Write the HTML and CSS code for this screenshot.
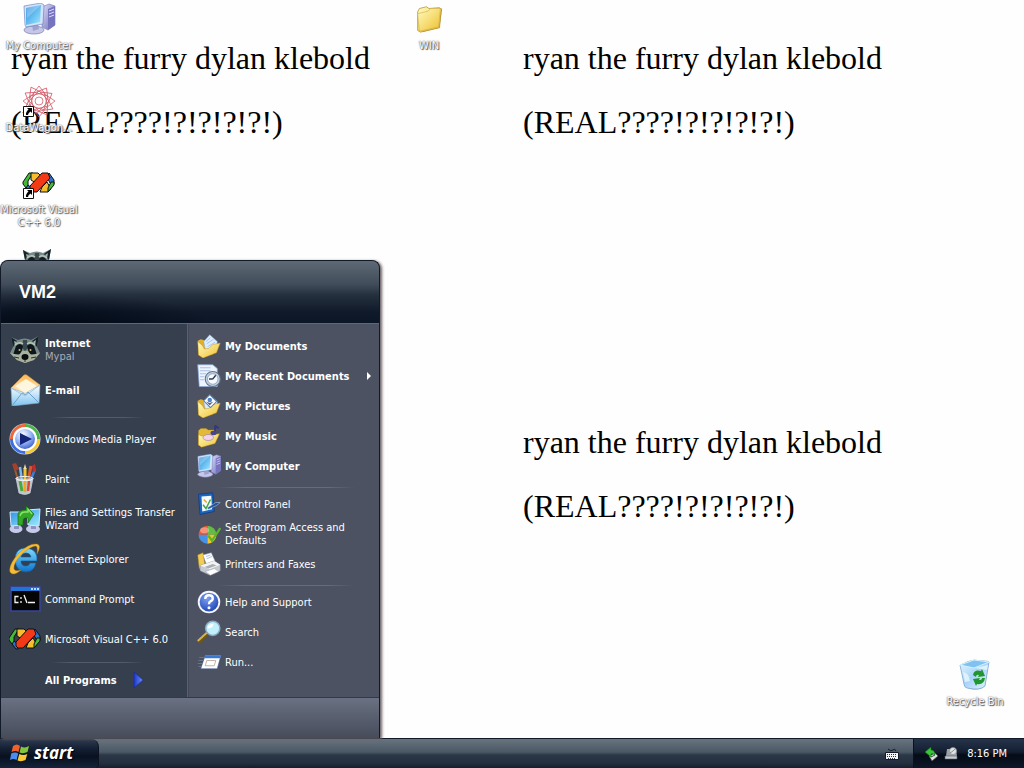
FILE: index.html
```html
<!DOCTYPE html>
<html lang="en">
<head>
<meta charset="utf-8">
<meta name="viewport" content="width=device-width, initial-scale=1">
<title>VM2 desktop</title>
<link rel="stylesheet" href="styles.css">
</head>
<body>
<svg class="sprite" aria-hidden="true">
  <defs>
    <linearGradient id="gFolder" x1="0" y1="0" x2="1" y2="1"><stop offset="0" stop-color="#fffbc0"/><stop offset="1" stop-color="#efc02e"/></linearGradient>
    <linearGradient id="gScreen" x1="0" y1="0" x2="1" y2="1"><stop offset="0" stop-color="#2a8de0"/><stop offset="1" stop-color="#9deaff"/></linearGradient>
    <linearGradient id="gTower" x1="0" y1="0" x2="1" y2="1"><stop offset="0" stop-color="#dcdcfa"/><stop offset="1" stop-color="#6c6cb8"/></linearGradient>
    <linearGradient id="gMail" x1="0" y1="0" x2="0" y2="1"><stop offset="0" stop-color="#ffffff"/><stop offset="1" stop-color="#7fc4f0"/></linearGradient>
    <linearGradient id="gFlap" x1="0" y1="0" x2="0" y2="1"><stop offset="0" stop-color="#ffb54a"/><stop offset="1" stop-color="#fff0cf"/></linearGradient>
    <linearGradient id="gBin" x1="0" y1="0" x2="1" y2="1"><stop offset="0" stop-color="#e6f7ff"/><stop offset=".5" stop-color="#a9d4fa"/><stop offset="1" stop-color="#e4f3ff"/></linearGradient>
    <radialGradient id="gBall" cx=".4" cy=".3" r=".8"><stop offset="0" stop-color="#fff"/><stop offset=".5" stop-color="#8fb0f5"/><stop offset="1" stop-color="#1f3fb8"/></radialGradient>
    <radialGradient id="gHelp" cx=".4" cy=".3" r=".8"><stop offset="0" stop-color="#7ea2f4"/><stop offset="1" stop-color="#1b3fb0"/></radialGradient>
    <linearGradient id="gIe" x1="0" y1="0" x2="0" y2="1"><stop offset="0" stop-color="#7fdcff"/><stop offset="1" stop-color="#0d72cc"/></linearGradient>
    <linearGradient id="gArrow" x1="0" y1="0" x2="1" y2="0"><stop offset="0" stop-color="#1c38c8"/><stop offset="1" stop-color="#6d90ff"/></linearGradient>
  </defs>

  <symbol id="computer" viewBox="0 0 32 32">
    <path d="M19 4l7-3 6 2v19l-7 5-6-3z" fill="url(#gTower)" stroke="#7a78b4" stroke-width=".6"/>
    <path d="M25 6l7-3v19l-7 5z" fill="#7674be"/>
    <path d="M26 8l5-2M26 11l5-2M26 14l5-2" stroke="#dedcff" stroke-width="1"/>
    <ellipse cx="11" cy="27" rx="10" ry="4" fill="#c4c6ea" stroke="#7b7ba8" stroke-width=".7"/>
    <path d="M9 21l6-1 1 6-6 2z" fill="#9fa2ce"/>
    <path d="M1 3l17-3 3 2-1 19-17 3-1-2z" fill="#d4e2fa" stroke="#5a79b8" stroke-width=".6"/>
    <path d="M3 5l15-3-1 17-14 3z" fill="url(#gScreen)"/>
    <path d="M3 5l15-3-14 13z" fill="#fff" opacity=".25"/>
  </symbol>
  <symbol id="folder" viewBox="0 0 32 32">
    <path d="M8 31l20-5 3-22-3 0z" fill="#8b7340" opacity=".7"/>
    <path d="M3 8l2-4 8-2 3 2 12-1 2 2-2 21-22 5-3-2z" fill="url(#gFolder)" stroke="#b08a26" stroke-width=".8"/>
    <path d="M3 10l12-3 3-3 11 0-2 21-22 5z" fill="url(#gFolder)" stroke="#c9a43a" stroke-width=".6"/>
  </symbol>
  <symbol id="openfolder" viewBox="0 0 32 32">
    <path d="M1 9l4-2 7 2 8 2 1 16-14 4-5-3z" fill="#e0b02c"/>
    <path d="M9 10l8-9 10 9-1 10-14 5z" fill="#dfeeff" stroke="#88aad2" stroke-width=".7"/>
    <path d="M12 10l6-5M13 13l9-6M14 17l10-6" stroke="#9cc0ee" stroke-width="1.2"/>
    <path d="M1 10l6 5 3 5 6-1 5-5 10-2-5 13-18 7-6-4z" fill="url(#gFolder)" stroke="#b98e1c" stroke-width=".6"/>
  </symbol>
  <symbol id="pictures" viewBox="0 0 32 32">
    <use href="#openfolder"/>
    <path d="M9 9l8-8 9 9-8 8z" fill="#fff" stroke="#507db2" stroke-width="1.4"/>
    <circle cx="17" cy="8" r="3" fill="#4e86c8"/><path d="M12 10l5 5 5-5-5 2z" fill="#555f86"/>
  </symbol>
  <symbol id="music" viewBox="0 0 32 32">
    <path d="M2 9l3-3 7 0 3 2 9 0 1 15-18 7-5-2z" fill="#e3b936" stroke="#b98e1c" stroke-width=".5"/>
    <path d="M2 14l4 2 24-3-6 13-18 5-4-3z" fill="url(#gFolder)" stroke="#b98e1c" stroke-width=".6"/>
    <path d="M24 2v10M24 2l5 4" stroke="#353580" stroke-width="2.4" fill="none"/><ellipse cx="22" cy="12" rx="4" ry="3" fill="#45458f"/>
    <ellipse cx="15" cy="18" rx="7" ry="4" fill="#edd4ec" stroke="#a887b2"/>
  </symbol>
  <symbol id="recent" viewBox="0 0 32 32">
    <path d="M1 1h20l6 5v24H3z" fill="#edf4ff" stroke="#8ea8d5"/>
    <path d="M4 5h14M4 9h14M4 13h8M4 17h6M4 21h6" stroke="#a9bfe6" stroke-width="1.6"/>
    <circle cx="21" cy="20" r="10" fill="#bfd0df" stroke="#60738e" stroke-width="1.4"/>
    <circle cx="21" cy="20" r="7" fill="#f7fbff" stroke="#8294a8"/>
    <path d="M21 20l4-5M21 20h-5" stroke="#283858" stroke-width="1.8"/>
  </symbol>
  <symbol id="raccoon" viewBox="0 0 32 32">
    <path d="M2 3l7 3q7-3 13 0l8-4-2 11 3 6-7 7-8 3-8-3-7-7 3-6z" fill="#798985"/>
    <path d="M2 3l6 4-4 6zM30 2l-7 5 5 6z" fill="#16242a"/>
    <path d="M5 7l3 1-2 3zM27 6l-3 2 2 3z" fill="#9bb4b4"/>
    <path d="M14 6l-1 8 3 3 3-3-1-8z" fill="#39484c"/>
    <path d="M7 12q4-4 7 0l-2 8-8 1zM25 12q-4-4-7 0l2 8 8 1z" fill="#0e171b"/>
    <path d="M6 11q4-4 8-1M18 10q4-3 8 1" stroke="#b8c4bc" stroke-width="1.500" fill="none"/>
    <path d="M1 19l9 2 3-4h6l3 4 9-2-6 7-9 3-8-3z" fill="#a9b09c"/>
    <ellipse cx="16" cy="23" rx="3.500" ry="3" fill="#090c10"/>
    <circle cx="10.500" cy="16" r="1" fill="#d6b86a"/><circle cx="21.500" cy="16" r="1" fill="#d6b86a"/>
    <path d="M16 26v2M5 23l5 1M27 23l-5 1" stroke="#26332f"/>
  </symbol>
  <symbol id="mail" viewBox="0 0 32 32">
    <path d="M2 14L15 1q2-1 4 1l12 9-14 10z" fill="url(#gFlap)" stroke="#dca15a" stroke-width=".6"/>
    <path d="M2 14l14 5 15-8-1 18L3 32z" fill="url(#gMail)" stroke="#88aacd" stroke-width=".6"/>
    <path d="M3 32l10-13 4 2 2-3 11 11" fill="none" stroke="#6ca0c8" stroke-width="1"/>
    <path d="M6 12l11-7 11 7-12 7z" fill="#fff6df"/>
    <path d="M2 14l14 8 15-11" fill="none" stroke="#a6c6dd"/>
  </symbol>
  <symbol id="wmp" viewBox="0 0 32 32">
    <circle cx="16" cy="16" r="15.500" fill="#cfd8ee"/>
    <g fill="none" stroke-width="3"><path d="M16 2.500A13.500 13.500 0 0 0 2.500 16" stroke="#f0673a"/><path d="M16 2.500A13.500 13.500 0 0 1 29.500 16" stroke="#4cb548"/><path d="M29.500 16A13.500 13.500 0 0 1 16 29.500" stroke="#f7c72c"/><path d="M16 29.500A13.500 13.500 0 0 1 2.500 16" stroke="#3a70e4"/></g>
    <circle cx="16" cy="16" r="11" fill="url(#gBall)" stroke="#fff" stroke-width="2"/>
    <path d="M11 10l12 6-12 6z" fill="#14257c"/>
  </symbol>
  <symbol id="paint" viewBox="0 0 32 32">
    <path d="M9 17L5 3" stroke="#9a5a35" stroke-width="2"/><path d="M3 1l4-1 3 6-4 2z" fill="#a4412e"/>
    <path d="M13 18L11 4" stroke="#7eb8e8" stroke-width="2.500"/><path d="M16 18V5" stroke="#f5c52c" stroke-width="3"/><path d="M14.500 6L16 1l1.500 5z" fill="#f6dcb0"/>
    <path d="M19 18l3-15" stroke="#d9572c" stroke-width="3"/><path d="M21 19l5-13" stroke="#3f7fd8" stroke-width="2.500"/><path d="M23 3l3-2 1 6-3 3z" fill="#c62d28"/>
    <path d="M7 15q9 3 17 0l-3 15q-5 3-11 0z" fill="#dfece4" opacity=".8" stroke="#eef" stroke-width=".8"/>
    <path d="M11 18l2 10" stroke="#49a83f" stroke-width="3"/><path d="M16 18v11" stroke="#f0a428" stroke-width="2.500"/><path d="M20 18l-1 10" stroke="#d8473a" stroke-width="2.500"/>
    <ellipse cx="15.500" cy="15.500" rx="8.500" ry="2" fill="none" stroke="#f2f7f5"/>
  </symbol>
  <symbol id="transfer" viewBox="0 0 32 32">
    <ellipse cx="7" cy="26" rx="6.500" ry="4" fill="#c7cbe9"/><ellipse cx="24" cy="26" rx="7" ry="4" fill="#c7cbe9"/>
    <path d="M5 21h5v5H5zM22 21h5v5h-5z" fill="#8c92bf"/>
    <path d="M1 9l11 0v13l-10 1zM18 7l13-1-1 17-11-1z" fill="url(#gScreen)" stroke="#d3e9ff"/>
    <path d="M9 22V12q0-4 5-5l3 0V3l8 8-6 9v-5h-3q-2 0-2 4v3z" fill="#33a926" stroke="#176b16" stroke-width=".7"/>
    <path d="M11 13q1-4 5-4h3V6l4 5" fill="none" stroke="#8be36f" stroke-width="1.300"/>
  </symbol>
  <symbol id="ie" viewBox="0 0 32 32">
    <path d="M27 20h-6q-1 3-4 3-5 0-5-5h16q1-12-11-13Q6 5 6 17q1 12 11 12 8 0 10-9zM12 14q1-4 5-4t5 4z" fill="url(#gIe)" fill-rule="evenodd" stroke="#0c5aa0" stroke-width=".6"/>
    <path d="M28 11q5-9 0-10Q20 0 10 10-1 22 1 29q3 5 11-2-6 2-7-1Q4 20 13 11 22 3 27 3q2 1 1 8z" fill="#f5bd35" stroke="#b37b12" stroke-width=".4"/>
  </symbol>
  <symbol id="cmd" viewBox="0 0 32 32">
    <path d="M2 4h29v24H2z" fill="#050505" stroke="#38459c" stroke-width="1.500"/>
    <path d="M2 4h29v4H2z" fill="#2274d4"/><path d="M22 6h2M25 6h2M28 6h2" stroke="#b8d9ff" stroke-width="2"/>
    <path d="M9.500 13.500H6v6h3.500M12 14v2M12 18v2M15 12l3 8M19 19.500h7" fill="none" stroke="#f3f3f3" stroke-width="1.300"/>
  </symbol>
  <symbol id="vc" viewBox="0 0 32 32">
    <g stroke="#101010" stroke-width="1">
      <path d="M0 15l6-9h4l-5 8v5l-2 2-3-4z" fill="#45ba37"/>
      <path d="M3 21l2-3 5 4-1 4H7z" fill="#2e72cf"/>
      <path d="M8 6h7l4 4-6 6-5-3z" fill="#f8bd2c"/>
      <path d="M19 20l5-5 4 7-3 3h-8z" fill="#f8bd2c"/>
      <path d="M26 6l5 7v4l-4-1-3-6z" fill="#2e72cf"/>
      <path d="M31 15v3l-6 7v-4l3-6z" fill="#45ba37"/>
      <path d="M7 19L19 6h6l2 5-13 14H9l-2-2z" fill="#f33a17"/>
    </g>
  </symbol>
  <symbol id="star" viewBox="0 0 32 32">
    <g fill="none" stroke="#d4606c" stroke-width=".8">
      <path id="sq" d="M16 1l7 9 9 6-9 7-7 9-7-9-9-7 9-6z"/><use href="#sq" transform="rotate(30 16 16)"/><use href="#sq" transform="rotate(60 16 16)"/>
      <path id="sqi" d="M16 6l10 10-10 10L6 16z"/><use href="#sqi" transform="rotate(30 16 16)"/><use href="#sqi" transform="rotate(60 16 16)"/>
      <circle cx="16" cy="16" r="4"/>
    </g>
  </symbol>
  <symbol id="shortcut" viewBox="0 0 11 11">
    <path d="M.5.5h10v10H.5z" fill="#fff" stroke="#111"/><path d="M4 2h5v5L7.500 5.500Q5 7 5 9H3q-.5-3 2.500-5.500z" fill="#000"/>
  </symbol>
  <symbol id="control" viewBox="0 0 32 32">
    <path d="M2 3l19-2 2 25-19 4z" fill="#1c67bd" stroke="#0c3a82"/><path d="M6 6l13-1 1 18-13 3z" fill="#f3fbff"/>
    <path d="M8 17l4 5 6-12" fill="none" stroke="#42a64b" stroke-width="2"/><path d="M9 10l4 4" stroke="#e4a82b" stroke-width="2"/>
    <path d="M14 21l11-7 6 0-5 4-11 5z" fill="#284f95" stroke="#9fc6ee" stroke-width=".8"/>
  </symbol>
  <symbol id="programs" viewBox="0 0 32 32">
    <path d="M14 17V5A12 12 0 0 0 2 17z" fill="#ee5a32"/><path d="M14 17V5a12 12 0 0 1 12 12z" fill="#66bb48"/><path d="M14 17H2a12 12 0 0 0 12 12z" fill="#4592e8"/><path d="M14 17h12a12 12 0 0 1-12 12z" fill="#f5c12f"/>
    <ellipse cx="10" cy="11" rx="6" ry="4" fill="#fff" opacity=".35"/>
    <path d="M15 18l5 7L31 8" fill="none" stroke="#58b725" stroke-width="3"/>
  </symbol>
  <symbol id="printer" viewBox="0 0 32 32">
    <path d="M1 4l7-3 3 19-8 2z" fill="#f1cd53" stroke="#b78c20" stroke-width=".6"/>
    <path d="M8 4l11-3 5 11-11 6z" fill="#fff" stroke="#9ba7b8" stroke-width=".6"/><path d="M12 6l6-2M13 9l7-3" stroke="#8ab0de"/>
    <path d="M4 18l19-6 8 5v8l-14 6-13-6z" fill="#c7cbd1" stroke="#777f8a" stroke-width=".7"/><path d="M4 18l19-6 8 5-14 6z" fill="#f3f4f2"/>
    <path d="M10 20l11-4 5 2-11 4z" fill="#a9afb6"/><path d="M11 26l12-4 6 4-11 5z" fill="#fff" stroke="#9199a5" stroke-width=".6"/>
  </symbol>
  <symbol id="help" viewBox="0 0 32 32">
    <circle cx="16" cy="16" r="15" fill="#f5f8ff"/><circle cx="16" cy="16" r="12.500" fill="url(#gHelp)"/>
    <path d="M11 12q0-5 5-5t5 4q0 3-3 4-2 1-2 4" fill="none" stroke="#fff" stroke-width="3.200"/><circle cx="16" cy="23.500" r="2" fill="#fff"/>
  </symbol>
  <symbol id="search" viewBox="0 0 32 32">
    <path d="M2 30l12-12" stroke="#6e5719" stroke-width="5"/><path d="M1 28l12-11" stroke="#d8b44c" stroke-width="2.500"/>
    <circle cx="21" cy="11" r="9.500" fill="#bff0fb" stroke="#8ca9bf" stroke-width="2"/><path d="M14 11q1-6 8-6-1 7-8 6z" fill="#fff"/>
  </symbol>
  <symbol id="run" viewBox="0 0 32 32">
    <path d="M3 10h6M2 14h6M1 18h6M2 22h4" stroke="#66758c" stroke-width="1.500"/>
    <path d="M11 7h21l-5 18H5z" fill="#fff" stroke="#35558f" stroke-width=".7"/><path d="M11 7h21l-1 4H10z" fill="#3979d4"/>
    <path d="M13 14h12l-2 7H11z" fill="#fff" stroke="#b39a8a"/>
  </symbol>
  <symbol id="bin" viewBox="0 0 32 32">
    <path d="M2 7q7-7 15-5 8-1 13 0l-4 25q-7 6-17 2-4-1-4-4z" fill="#75869b" opacity=".7"/>
    <path d="M1 6L15 1l15 2-4 24q-5 5-18 2-3-1-3-4z" fill="url(#gBin)" stroke="#7ea8d1" stroke-width=".8"/>
    <path d="M1 6l14 3 15-6L15 1z" fill="#80c2ef" stroke="#d4f2ff"/>
    <path d="M4 13q6 1 7 9l-5 1zM16 9l13-3-1 5z" fill="#e7f8ff" opacity=".8"/>
    <g fill="#21962e"><path d="M14 16q1-6 8-4l1-2 3 7-7 1 1-2q-3-1-3 2z"/><path d="M26 19q-1 7-8 6l-1 2-3-7 7-1-1 2q3 0 3-2z"/></g>
  </symbol>
  <symbol id="flag" viewBox="0 0 20 20">
    <path d="M3 3q4-3 7 0L8.500 9q-3-2-7 0z" fill="#f0602c"/><path d="M11 3.500q4 2 8-.5L17.500 9q-4 2-8 .5z" fill="#82c63e"/>
    <path d="M1.200 10.500q4-2 7 0L6.500 17q-3-2-6.500 0z" fill="#4a8df0"/><path d="M9.300 11q4 2 8 0L15.500 17q-4 2-8 .5z" fill="#fbca34"/>
  </symbol>
  <symbol id="keyboard" viewBox="0 0 14 14">
    <path d="M3 2q3 3 5 1t3 1" fill="none" stroke="#111a26"/><path d="M.5 5.500h13v7H.5z" fill="#f4f4f4" stroke="#111a26"/>
    <path d="M2 7.500h10M2 9.500h10M3 11.500h8" stroke="#293241" stroke-dasharray="1 1"/>
  </symbol>
  <symbol id="eject" viewBox="0 0 16 16">
    <path d="M6 10l6-3 3 3-6 5z" fill="#dfe3df" stroke="#404a46" stroke-width=".7"/><path d="M8 11l4-2" stroke="#444"/>
    <path d="M2 6l6-5v3q4 0 4 5-2-2-4-1v3z" fill="#39c536" stroke="#0f6a17" stroke-width=".6"/>
  </symbol>
  <symbol id="drive" viewBox="0 0 16 16">
    <path d="M4 3h9l1 7H3z" fill="#9da2a6"/><circle cx="10" cy="5" r="3.500" fill="#e1e4e4" stroke="#858b91" stroke-width=".6"/>
    <path d="M2 10h12v3H2z" fill="#c8cccf" stroke="#535b64" stroke-width=".6"/><path d="M10 5l3-3M7 7l3-2" stroke="#777" stroke-width=".8"/>
  </symbol>
</svg>

<main class="desktop">
  <div class="wallpaper">
    <div class="tile"><p>ryan the furry dylan klebold</p><p>(REAL????!?!?!?!?!)</p></div>
    <div class="tile"><p>ryan the furry dylan klebold</p><p>(REAL????!?!?!?!?!)</p></div>
    <div class="tile"></div>
    <div class="tile"><p>ryan the furry dylan klebold</p><p>(REAL????!?!?!?!?!)</p></div>
  </div>

  <a href="#computer" class="shortcut pos-computer"><span class="art"><svg><use href="#computer"/></svg></span><span>My Computer</span></a>
  <a href="#star" class="shortcut pos-wagon"><span class="art"><svg><use href="#star"/></svg><svg class="badge"><use href="#shortcut"/></svg></span><span>DataWagon...</span></a>
  <a href="#vc" class="shortcut pos-vc"><span class="art"><svg><use href="#vc"/></svg><svg class="badge"><use href="#shortcut"/></svg></span><span>Microsoft Visual<br>C++ 6.0</span></a>
  <a href="#raccoon" class="shortcut pos-raccoon" aria-label="Mypal"><span class="art"><svg><use href="#raccoon"/></svg></span></a>
  <a href="#folder" class="shortcut pos-win"><span class="art"><svg class="small"><use href="#folder"/></svg></span><span>WIN</span></a>
  <a href="#bin" class="shortcut pos-bin"><span class="art"><svg><use href="#bin"/></svg></span><span>Recycle Bin</span></a>

  <section class="menu" aria-label="Start menu">
    <header class="menu-head">VM2</header>
    <div class="menu-body">
      <nav class="programs">
        <button class="item strong"><svg><use href="#raccoon"/></svg><span>Internet<small>Mypal</small></span></button>
        <button class="item strong"><svg><use href="#mail"/></svg><span>E-mail</span></button>
        <hr>
        <button class="item"><svg><use href="#wmp"/></svg><span>Windows Media Player</span></button>
        <button class="item"><svg><use href="#paint"/></svg><span>Paint</span></button>
        <button class="item"><svg><use href="#transfer"/></svg><span>Files and Settings Transfer Wizard</span></button>
        <button class="item"><svg><use href="#ie"/></svg><span>Internet Explorer</span></button>
        <button class="item"><svg><use href="#cmd"/></svg><span>Command Prompt</span></button>
        <button class="item"><svg><use href="#vc"/></svg><span>Microsoft Visual C++ 6.0</span></button>
        <hr class="tight">
        <button class="all strong">All Programs<svg viewBox="0 0 10 16"><path d="M1 0l9 8-9 8z" fill="url(#gArrow)" stroke="#1a2c90" stroke-width=".6"/></svg></button>
      </nav>
      <nav class="places">
        <button class="item strong"><svg><use href="#openfolder"/></svg><span>My Documents</span></button>
        <button class="item strong"><svg><use href="#recent"/></svg><span>My Recent Documents</span><i class="more"></i></button>
        <button class="item strong"><svg><use href="#pictures"/></svg><span>My Pictures</span></button>
        <button class="item strong"><svg><use href="#music"/></svg><span>My Music</span></button>
        <button class="item strong"><svg><use href="#computer"/></svg><span>My Computer</span></button>
        <hr>
        <button class="item"><svg><use href="#control"/></svg><span>Control Panel</span></button>
        <button class="item"><svg><use href="#programs"/></svg><span>Set Program Access and Defaults</span></button>
        <button class="item"><svg><use href="#printer"/></svg><span>Printers and Faxes</span></button>
        <hr>
        <button class="item"><svg><use href="#help"/></svg><span>Help and Support</span></button>
        <button class="item"><svg><use href="#search"/></svg><span>Search</span></button>
        <button class="item"><svg><use href="#run"/></svg><span>Run...</span></button>
      </nav>
    </div>
    <footer class="menu-foot"></footer>
  </section>
</main>

<footer class="taskbar">
  <button class="start"><svg><use href="#flag"/></svg>start</button>
  <button class="lang" aria-label="Keyboard"><svg><use href="#keyboard"/></svg></button>
  <div class="tray"><svg><use href="#eject"/></svg><svg><use href="#drive"/></svg><time>8:16 PM</time></div>
</footer>
</body>
</html>
```
FILE: styles.css
```css
* { box-sizing: border-box; }

body {
  margin: 0;
  height: 100vh;
  display: flex;
  flex-direction: column;
  overflow: hidden;
  background: #fefefe;
  font: 11px/13px "DejaVu Sans Condensed", "DejaVu Sans", sans-serif;
}

button {
  border: 0;
  margin: 0;
  padding: 0;
  background: none;
  color: inherit;
  font: inherit;
  text-align: left;
}

.sprite { position: absolute; width: 0; height: 0; }

.desktop { flex: 1; position: relative; }

.wallpaper {
  position: absolute;
  inset: 0 0 auto;
  height: 100vh;
  display: grid;
  grid-template: 1fr 1fr / 1fr 1fr;
}

.tile {
  padding: 40px 11px;
  color: #000;
  font: 32px/36px "Liberation Serif", serif;
}
.tile p { margin: 0 0 28px; white-space: nowrap; }

.shortcut {
  position: absolute;
  width: 80px;
  display: flex;
  flex-direction: column;
  align-items: center;
  gap: 4px;
  color: #fff;
  text-align: center;
  text-decoration: none;
  white-space: nowrap;
  text-shadow: 0 0 1px #666, 1px 1px 1px #555, 0 0 2px #888;
}
.art { position: relative; height: 32px; }
.art svg { display: block; width: 34px; height: 32px; }
.art .small { width: 28px; }
.art .badge { position: absolute; left: 1px; bottom: 0; width: 11px; height: 11px; }

.pos-computer { left: -1px; top: 3px; }
.pos-wagon { left: -1px; top: 85px; }
.pos-vc { left: -1px; top: 167px; }
.pos-raccoon { left: -3px; top: 247px; }
.pos-win { left: 389px; top: 3px; }
.pos-bin { right: 9px; top: 659px; }

.menu {
  position: absolute;
  left: 0;
  bottom: 0;
  width: 380px;
  border: 1px solid #101a28;
  border-bottom: 0;
  border-radius: 8px 8px 0 0;
  overflow: hidden;
  color: #fff;
  background: #363f4e;
  box-shadow: 2px 1px 3px #6b6266;
}

.menu-head {
  padding: 18px;
  height: 62px;
  font: bold 18px/26px "Liberation Sans", Arial, sans-serif;
  background:
    radial-gradient(ellipse at 14% 100%, #030a16 0, transparent 34%),
    linear-gradient(#5e6975 0, #414c5a 38%, #26313f 54%, #101a2a 82%, #0a1526 100%);
}

.menu-body {
  display: grid;
  grid-template-columns: 187fr 191fr;
  border-top: 1px solid #5d6878;
  border-bottom: 1px solid #323a48;
}

.programs { padding: 6px 8px 0; border-right: 1px solid #596273; background: #363f4e; }
.places { padding: 7px 8px 20px; border-left: 1px solid #414959; background: #4c5262; }

.item { display: flex; align-items: center; gap: 4px; width: 100%; height: 40px; }
.item svg { flex: none; width: 32px; height: 32px; }
.item small { display: block; font-size: 11px; font-weight: normal; color: #a6acb8; }
.places .item { height: 30px; }
.places .item svg { width: 24px; height: 24px; }
.strong { font-weight: bold; }

.more {
  margin-left: auto;
  border: 4px solid transparent;
  border-left-color: #fff;
  border-right-width: 0;
}

hr {
  height: 1px;
  margin: 7px 36px 1px 42px;
  border: 0;
  background: linear-gradient(90deg, transparent, #525b6b 20%, #525b6b 80%, transparent);
}
hr.tight { margin: 3px 36px 1px 42px; }
.places hr { margin: 6px 16px 1px 20px; background: linear-gradient(90deg, transparent, #666c7e 20%, #666c7e 80%, transparent); }

.all { display: flex; align-items: center; gap: 16px; height: 32px; padding-left: 36px; }
.all svg { width: 10px; height: 16px; }

.menu-foot { height: 40px; background: linear-gradient(#6a7182, #464c5a); }

.taskbar {
  height: 30px;
  display: flex;
  color: #fff;
  border-top: 1px solid #101a28;
  background: linear-gradient(#68757f 0, #4b5865 45%, #2c3848 55%, #222e3e 85%, #141e2c 100%);
}

.start {
  display: flex;
  align-items: center;
  gap: 4px;
  width: 99px;
  padding: 0 0 2px 10px;
  border-radius: 0 8px 4px 0;
  border-right: 1px solid #0b1220;
  font: italic bold 17px/24px "Open Sans", "Noto Sans", sans-serif;
  text-shadow: 1px 1px 1px #000;
  background: linear-gradient(#2d3b50 0, #172237 30%, #08111f 60%, #14243b 100%);
}
.start svg { width: 20px; height: 20px; }

.lang { margin-left: auto; width: 42px; display: flex; align-items: center; justify-content: center; }
.lang svg { width: 14px; height: 14px; }

.tray {
  display: flex;
  align-items: center;
  gap: 4px;
  padding: 0 17px 0 9px;
  border-left: 1px solid #0a1220;
  background: linear-gradient(#26344a 0, #131e30 45%, #050b16 55%, #0d1728 100%);
}
.tray svg { width: 16px; height: 16px; }
.tray time { margin-left: 4px; }
```
